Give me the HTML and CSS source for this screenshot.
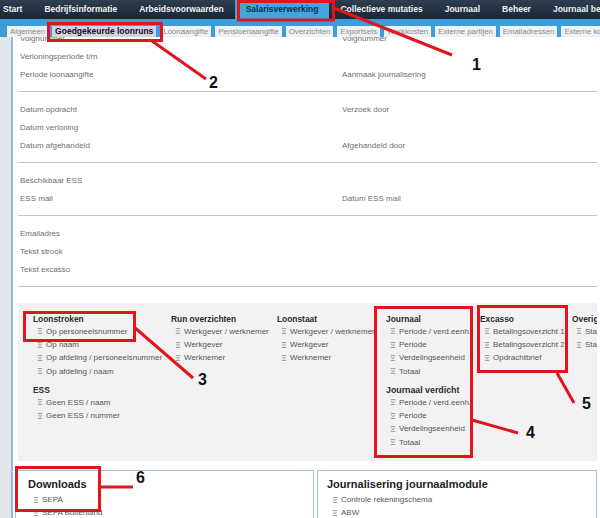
FILE: index.html
```html
<!DOCTYPE html>
<html lang="nl">
<head>
<meta charset="utf-8">
<title>Salarisverwerking - Goedgekeurde loonruns</title>
<link rel="stylesheet" href="styles.css">
</head>
<body>
<svg class="defs" width="0" height="0" aria-hidden="true">
  <symbol id="dl" viewBox="0 0 6 6">
    <path d="M0.8 0.6 H5.2" stroke="#8d8d8d" stroke-width="0.9" fill="none"/>
    <path d="M1.4 2 L3 3.8 L4.6 2" stroke="#8d8d8d" stroke-width="0.9" fill="none"/>
    <path d="M0.8 5.4 H5.2" stroke="#8d8d8d" stroke-width="0.9" fill="none"/>
  </symbol>
</svg>
<div class="page">
  <nav class="topnav">
    <span class="nav-item first">Start</span>
    <span class="nav-item">Bedrijfsinformatie</span>
    <span class="nav-item">Arbeidsvoorwaarden</span>
    <span class="nav-item active">Salarisverwerking</span>
    <span class="nav-item">Collectieve mutaties</span>
    <span class="nav-item">Journaal</span>
    <span class="nav-item">Beheer</span>
    <span class="nav-item">Journaal beheer</span>
  </nav>
  <div class="tabbar">
    <span class="tab">Algemeen</span>
    <span class="tab active">Goedgekeurde loonruns</span>
    <span class="tab">Loonaangifte</span>
    <span class="tab">Pensioenaangifte</span>
    <span class="tab">Overzichten</span>
    <span class="tab">Exportsets</span>
    <span class="tab">Werkkosten</span>
    <span class="tab">Externe partijen</span>
    <span class="tab">Emailadressen</span>
    <span class="tab">Externe koppelingen</span>
  </div>
  <div class="main">
    <div class="sidestrip"></div>
    <div class="content">
      <div class="form">
        <div class="fsec">
          <span>Volgnummer</span><span>Volgnummer</span>
          <span>Verloningsperiode t/m</span><span></span>
          <span>Periode loonaangifte</span><span>Aanmaak journalisering</span>
        </div>
        <div class="fsec">
          <span>Datum opdracht</span><span>Verzoek door</span>
          <span>Datum verloning</span><span></span>
          <span>Datum afgehandeld</span><span>Afgehandeld door</span>
        </div>
        <div class="fsec">
          <span>Beschikbaar ESS</span><span></span>
          <span>ESS mail</span><span>Datum ESS mail</span>
        </div>
        <div class="fsec">
          <span>Emailadres</span><span></span>
          <span>Tekst strook</span><span></span>
          <span>Tekst excasso</span><span></span>
        </div>
      </div>

      <div class="reports">
        <div class="rcol c1">
          <div class="rgroup">
            <div class="rhead">Loonstroken</div>
            <div class="ritem"><svg class="ico"><use href="#dl"/></svg>Op personeelsnummer</div>
            <div class="ritem"><svg class="ico"><use href="#dl"/></svg>Op naam</div>
            <div class="ritem"><svg class="ico"><use href="#dl"/></svg>Op afdeling / personeelsnummer</div>
            <div class="ritem"><svg class="ico"><use href="#dl"/></svg>Op afdeling / naam</div>
          </div>
          <div class="rgroup">
            <div class="rhead">ESS</div>
            <div class="ritem"><svg class="ico"><use href="#dl"/></svg>Geen ESS / naam</div>
            <div class="ritem"><svg class="ico"><use href="#dl"/></svg>Geen ESS / nummer</div>
          </div>
        </div>
        <div class="rcol c2">
          <div class="rgroup">
            <div class="rhead">Run overzichten</div>
            <div class="ritem"><svg class="ico"><use href="#dl"/></svg>Werkgever / werknemer</div>
            <div class="ritem"><svg class="ico"><use href="#dl"/></svg>Werkgever</div>
            <div class="ritem"><svg class="ico"><use href="#dl"/></svg>Werknemer</div>
          </div>
        </div>
        <div class="rcol c3">
          <div class="rgroup">
            <div class="rhead">Loonstaat</div>
            <div class="ritem"><svg class="ico"><use href="#dl"/></svg>Werkgever / werknemer</div>
            <div class="ritem"><svg class="ico"><use href="#dl"/></svg>Werkgever</div>
            <div class="ritem"><svg class="ico"><use href="#dl"/></svg>Werknemer</div>
          </div>
        </div>
        <div class="rcol c4">
          <div class="rgroup">
            <div class="rhead">Journaal</div>
            <div class="ritem"><svg class="ico"><use href="#dl"/></svg>Periode / verd.eenh.</div>
            <div class="ritem"><svg class="ico"><use href="#dl"/></svg>Periode</div>
            <div class="ritem"><svg class="ico"><use href="#dl"/></svg>Verdelingseenheid</div>
            <div class="ritem"><svg class="ico"><use href="#dl"/></svg>Totaal</div>
          </div>
          <div class="rgroup">
            <div class="rhead big">Journaal verdicht</div>
            <div class="ritem"><svg class="ico"><use href="#dl"/></svg>Periode / verd.eenh.</div>
            <div class="ritem"><svg class="ico"><use href="#dl"/></svg>Periode</div>
            <div class="ritem"><svg class="ico"><use href="#dl"/></svg>Verdelingseenheid</div>
            <div class="ritem"><svg class="ico"><use href="#dl"/></svg>Totaal</div>
          </div>
        </div>
        <div class="rcol c5">
          <div class="rgroup">
            <div class="rhead">Excasso</div>
            <div class="ritem"><svg class="ico"><use href="#dl"/></svg>Betalingsoverzicht 1</div>
            <div class="ritem"><svg class="ico"><use href="#dl"/></svg>Betalingsoverzicht 2</div>
            <div class="ritem"><svg class="ico"><use href="#dl"/></svg>Opdrachtbrief</div>
          </div>
        </div>
        <div class="rcol c6">
          <div class="rgroup">
            <div class="rhead">Overige</div>
            <div class="ritem"><svg class="ico"><use href="#dl"/></svg>Standaard</div>
            <div class="ritem"><svg class="ico"><use href="#dl"/></svg>Standaard</div>
          </div>
        </div>
      </div>

      <div class="bottom">
        <div class="bbox left">
          <div class="bhead">Downloads</div>
          <div class="bitem"><svg class="ico"><use href="#dl"/></svg>SEPA</div>
          <div class="bitem"><svg class="ico"><use href="#dl"/></svg>SEPA Buitenland</div>
        </div>
        <div class="bbox right">
          <div class="bhead">Journalisering journaalmodule</div>
          <div class="bitem"><svg class="ico"><use href="#dl"/></svg>Controle rekeningschema</div>
          <div class="bitem"><svg class="ico"><use href="#dl"/></svg>ABW</div>
        </div>
      </div>
    </div>
  </div>

  <svg class="annot" width="600" height="518" viewBox="0 0 600 518" aria-hidden="true">
    <g stroke="#e2141c" stroke-width="3" fill="none">
      <rect x="238.5" y="1.5" width="95" height="18.5"/>
      <rect x="48.5" y="23.5" width="113" height="17"/>
      <rect x="24.5" y="312.5" width="110" height="28"/>
      <rect x="375.5" y="307.5" width="96" height="149"/>
      <rect x="478.5" y="306.5" width="88" height="65"/>
      <rect x="16.5" y="467.5" width="83" height="43"/>
      <line x1="334" y1="8" x2="452" y2="55"/>
      <line x1="152" y1="41" x2="206" y2="79"/>
      <line x1="134" y1="327" x2="193" y2="378"/>
      <line x1="472" y1="420" x2="518" y2="433"/>
      <line x1="557" y1="373" x2="574" y2="403"/>
      <line x1="100" y1="487" x2="133" y2="487"/>
    </g>
  </svg>
  <span class="num n1">1</span>
  <span class="num n2">2</span>
  <span class="num n3">3</span>
  <span class="num n4">4</span>
  <span class="num n5">5</span>
  <span class="num n6">6</span>
</div>
</body>
</html>
```

FILE: styles.css
```css
html, body {
  margin: 0;
  padding: 0;
}
body {
  width: 600px;
  height: 518px;
  overflow: hidden;
  background: #ffffff;
  font-family: "Liberation Sans", Arial, sans-serif;
}
.defs {
  position: absolute;
  width: 0;
  height: 0;
}
.page {
  position: relative;
  width: 600px;
  height: 518px;
  overflow: hidden;
  display: flex;
  flex-direction: column;
}

/* top navigation */
.topnav {
  flex: none;
  height: 19px;
  display: flex;
  align-items: stretch;
  padding-left: 3px;
  background: linear-gradient(#2f3f51, #1a2532);
  white-space: nowrap;
  overflow: hidden;
}
.nav-item {
  padding: 0 11px;
  line-height: 19px;
  font-size: 8.5px;
  font-weight: bold;
  color: #eef2f6;
}
.nav-item.first {
  padding-left: 0;
}
.nav-item.active {
  background: #41a5de;
  color: #14304a;
}

/* tab bar */
.tabbar {
  flex: none;
  height: 18px;
  display: flex;
  align-items: flex-end;
  gap: 4px;
  padding-left: 7px;
  background: #3c9dd8;
  white-space: nowrap;
  overflow: hidden;
}
.tab {
  height: 11px;
  line-height: 11px;
  padding: 0 3px;
  background: #eef2f5;
  color: #8a8a8a;
  font-size: 7.8px;
}
.tab.active {
  background: #cbd6df;
  color: #111111;
  font-weight: bold;
  font-size: 8.5px;
}

/* main area */
.main {
  flex: 1;
  display: flex;
  min-height: 0;
}
.sidestrip {
  flex: none;
  width: 11px;
  background: #e2e7ec;
  border-right: 2px solid #8fbadc;
}
.content {
  flex: 1;
  min-width: 0;
  overflow: hidden;
  padding: 0 3px 0 5px;
}

/* form */
.form {
  margin-top: -16px;
}
.fsec {
  display: grid;
  grid-template-columns: 322px 1fr;
  grid-auto-rows: 18px;
  align-items: center;
  padding: 8px 0 8px 2px;
  border-bottom: 1px solid #c3c6c9;
  font-size: 8px;
  color: #6f6f6f;
  white-space: nowrap;
}

/* reports panel */
.reports {
  margin-top: 16px;
  height: 158px;
  box-sizing: border-box;
  padding: 10.5px 0 0 15px;
  background: #f2f2f2;
  display: flex;
  overflow: hidden;
}
.rcol {
  flex: none;
}
.c1 { width: 138px; }
.c2 { width: 106px; }
.c3 { width: 109px; }
.c4 { width: 94px; }
.c5 { width: 92px; }
.c6 { flex: 1; min-width: 0; overflow: hidden; }
.rgroup + .rgroup {
  margin-top: 6.4px;
}
.rhead {
  font-size: 8.4px;
  font-weight: bold;
  color: #2b2b2b;
  line-height: 11px;
  white-space: nowrap;
}
.rhead.big {
  font-size: 8.8px;
}
.ritem {
  display: flex;
  align-items: center;
  padding-left: 4px;
  font-size: 8px;
  line-height: 13.4px;
  color: #555555;
  white-space: nowrap;
}
.ico {
  flex: none;
  width: 6px;
  height: 6px;
  margin-right: 3px;
}

/* bottom boxes */
.bottom {
  display: flex;
  gap: 3px;
  margin: 9px 0 0 -3px;
}
.bbox {
  height: 60px;
  border: 1px solid #a3c6df;
  border-bottom: none;
  padding: 7px 0 0 12px;
  overflow: hidden;
}
.bbox.left {
  flex: none;
  width: 285px;
}
.bbox.right {
  flex: 1;
  padding-left: 9px;
}
.bhead {
  font-size: 11px;
  font-weight: bold;
  color: #222222;
  line-height: 13px;
  margin-bottom: 2px;
  white-space: nowrap;
}
.bitem {
  display: flex;
  align-items: center;
  padding-left: 5px;
  font-size: 8px;
  line-height: 13.4px;
  color: #555555;
  white-space: nowrap;
}

/* annotation overlay */
.annot {
  position: absolute;
  left: 0;
  top: 0;
  pointer-events: none;
}
.num {
  position: absolute;
  font-family: "Liberation Sans", Arial, sans-serif;
  font-weight: bold;
  font-size: 16px;
  line-height: 1;
  color: #111111;
}
.n1 { left: 472px; top: 57px; }
.n2 { left: 209px; top: 75px; }
.n3 { left: 198px; top: 372px; }
.n4 { left: 526px; top: 425px; }
.n5 { left: 582px; top: 396px; }
.n6 { left: 136px; top: 470px; }
```
